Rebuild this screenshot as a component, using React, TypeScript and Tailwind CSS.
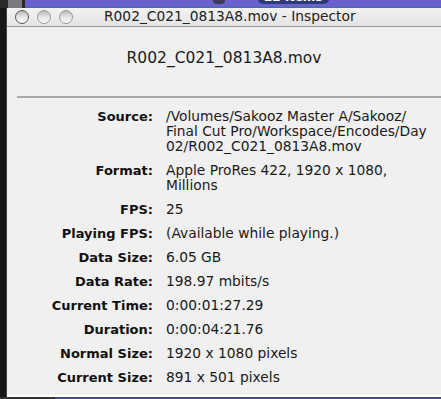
import React from "react";

const rows: { label: string; value: string[] }[] = [
  { label: "Source:", value: ["/Volumes/Sakooz Master A/Sakooz/", "Final Cut Pro/Workspace/Encodes/Day", "02/R002_C021_0813A8.mov"] },
  { label: "Format:", value: ["Apple ProRes 422, 1920 x 1080,", "Millions"] },
  { label: "FPS:", value: ["25"] },
  { label: "Playing FPS:", value: ["(Available while playing.)"] },
  { label: "Data Size:", value: ["6.05 GB"] },
  { label: "Data Rate:", value: ["198.97 mbits/s"] },
  { label: "Current Time:", value: ["0:00:01:27.29"] },
  { label: "Duration:", value: ["0:00:04:21.76"] },
  { label: "Normal Size:", value: ["1920 x 1080 pixels"] },
  { label: "Current Size:", value: ["891 x 501 pixels"] },
];

function Light({ dark }: { dark?: boolean }) {
  return (
    <div
      className={`w-[14px] h-[14px] rounded-full border ${dark ? "border-[#555]" : "border-[#9a9a9a]"} bg-gradient-to-b from-[#b8b8b8] via-[#e6e6e6] to-[#fafafa]`}
    />
  );
}

export default function App() {
  return (
    <div className="w-[441px] h-[399px] overflow-hidden bg-[#151515] flex flex-col" style={{ fontFamily: '"DejaVu Sans", Verdana, sans-serif' }}>
      <div className="h-[8px] flex shrink-0">
        <div className="w-[25px] bg-[#2a2a2a] flex">
          <div className="w-[8px]" />
          <div className="w-[14px] bg-[#7a7a80]" />
        </div>
        <div className="flex-1 bg-[#6a62cc] border-b border-[#3f6fb0] relative overflow-hidden">
          <div className="absolute left-[188px] top-[-6px] w-[12px] h-[10px] rounded-sm bg-[#3a3d55]" />
          <div className="absolute left-[233px] top-[-10px] px-[6px] rounded-[5px] bg-[#2e3a78] text-white font-bold text-[12px] leading-[14px]">22 items</div>
        </div>
      </div>
      <div className="flex flex-1 min-h-0">
        <div className="w-[7px] bg-[#161616] border-r border-[#444]" />
        <div className="flex-1 flex flex-col bg-[#f0f0f0]">
          <div className="h-[19px] shrink-0 flex items-center bg-gradient-to-b from-[#f2f2f2] to-[#e4e4e4] border-b border-[#9c9c9c]">
            <div className="flex gap-[8px] pl-[8px]">
              <Light dark />
              <Light />
              <Light />
            </div>
            <div className="ml-[31px] text-[13.8px] text-[#222] leading-none">R002_C021_0813A8.mov - Inspector</div>
          </div>
          <div className="flex-1 flex flex-col">
            <div className="h-[71px] flex items-center justify-center border-b-2 border-[#a8a8a8] ml-[10px]">
              <div className="text-[15.5px] text-[#1a1a1a] -ml-[10px] -mt-[6px]">R002_C021_0813A8.mov</div>
            </div>
            <div className="pt-[11px] flex flex-col gap-[9px] text-[13.8px] leading-[15px] text-[#1a1a1a]">
              {rows.map((r) => (
                <div key={r.label} className="flex">
                  <div className="w-[146px] text-right font-bold text-[13px] text-[#111]">{r.label}</div>
                  <div className="pl-[13px] flex flex-col">
                    {r.value.map((v, i) => (
                      <div key={i} className="whitespace-nowrap">{v}</div>
                    ))}
                  </div>
                </div>
              ))}
            </div>
          </div>
          <div className="h-[2px] bg-white mt-auto" />
        </div>
      </div>
      <div className="h-[2px] flex shrink-0">
        <div className="w-[55px] bg-[#333]" />
        <div className="flex-1 bg-[#4a4890]" />
      </div>
    </div>
  );
}
